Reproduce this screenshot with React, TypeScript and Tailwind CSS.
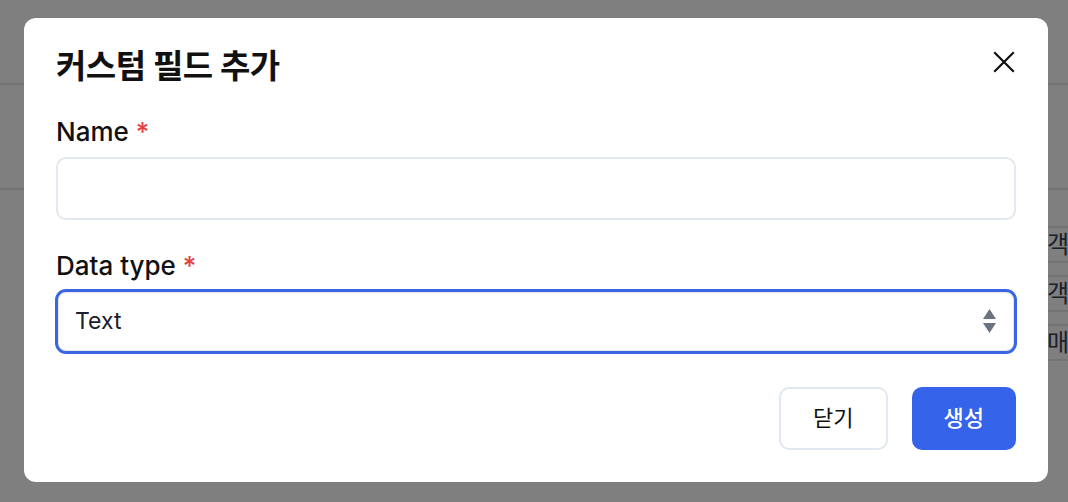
import { useState } from "react";

const FONT = { fontFamily: 'Inter, "Noto Sans CJK KR", sans-serif' };

function BackgroundPage() {
  return (
    <div className="min-h-screen w-full bg-white" style={FONT}>
      <div className="h-[85px] border-b-2 border-gray-200" />
      <div className="h-[105px] border-b-2 border-gray-200" />
      <div className="flex flex-col gap-[12px] pt-[36px] pl-[1015px]">
        {["고객", "고객", "판매"].map((t, i) => (
          <div
            key={i}
            className="flex h-[37px] w-[120px] items-center rounded-md border-2 border-gray-200 px-2 text-[24px] leading-none text-gray-700"
          >
            {t}
          </div>
        ))}
      </div>
    </div>
  );
}

function CloseIcon() {
  return (
    <svg width="22" height="22" viewBox="0 0 22 22" fill="none">
      <path d="M2 2 L20 20 M20 2 L2 20" stroke="#111" strokeWidth="2.2" strokeLinecap="square" />
    </svg>
  );
}

export default function App() {
  const [name, setName] = useState("");
  const [dataType, setDataType] = useState("Text");

  return (
    <div className="relative min-h-screen w-full overflow-hidden" style={FONT}>
      <BackgroundPage />
      <div className="fixed inset-0 bg-black/50" />
      <div className="fixed inset-0 pt-[18px] pl-[24px]">
        <div className="flex h-[464px] w-[1024px] flex-col rounded-[12px] bg-white px-8 pt-[28px] pb-[32px]">
          <div className="flex items-center justify-between">
            <h2 className="text-[33px] leading-[40px] font-bold tracking-[-0.5px] text-[#111]">커스텀 필드 추가</h2>
            <button className="-mr-[2px] -mt-[8px] flex h-[28px] w-[28px] items-center justify-center">
              <CloseIcon />
            </button>
          </div>

          <label className="mt-[30px] mb-[9px] text-[26px] leading-[32px] font-medium text-[#111]">
            Name <span className="text-[#e53e3e]">*</span>
          </label>
          <input
            value={name}
            onChange={(e) => setName(e.target.value)}
            className="h-[63px] w-full rounded-[10px] border-2 border-[#e2e8f0] px-[18px] text-[23px] outline-none"
          />

          <label className="mt-[30px] mb-[8px] text-[26px] leading-[32px] font-medium text-[#111]">
            Data type <span className="text-[#e53e3e]">*</span>
          </label>
          <div className="relative">
            <select
              value={dataType}
              onChange={(e) => setDataType(e.target.value)}
              className="h-[63px] w-full appearance-none rounded-[10px] border-2 border-[#3a66e3] bg-white px-[17px] text-[23px] text-[#1a202c] shadow-[0_0_0_1px_#3a66e3,inset_0_0_0_1px_#e5e7eb] outline-none"
              style={FONT}
            >
              <option>Text</option>
              <option>Number</option>
              <option>Date</option>
            </select>
            <svg
              className="pointer-events-none absolute top-[19px] right-[20px]"
              width="13"
              height="24"
              viewBox="0 0 13 24"
            >
              <path d="M6.5 0 L13 10 L0 10 Z M0 14 L13 14 L6.5 24 Z" fill="#6b7280" />
            </svg>
          </div>

          <div className="mt-auto flex justify-end gap-[24px]">
            <button className="h-[63px] rounded-[10px] border-2 border-[#e2e8f0] bg-white px-[32px] text-[22px] font-normal text-[#111]">
              닫기
            </button>
            <button className="h-[63px] rounded-[10px] bg-[#3563e9] px-[32px] text-[22px] font-medium text-white">
              생성
            </button>
          </div>
        </div>
      </div>
    </div>
  );
}
